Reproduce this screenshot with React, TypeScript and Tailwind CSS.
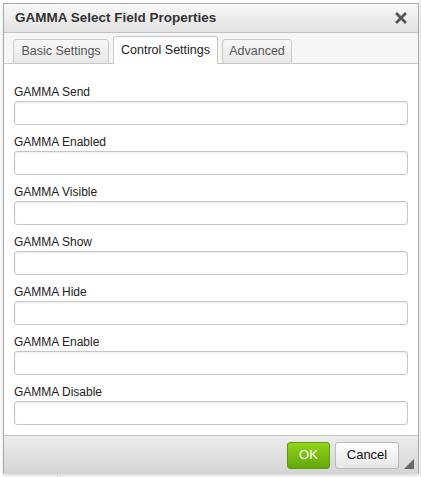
import React from "react";

const fields = [
  "GAMMA Send",
  "GAMMA Enabled",
  "GAMMA Visible",
  "GAMMA Show",
  "GAMMA Hide",
  "GAMMA Enable",
  "GAMMA Disable",
];

function CloseIcon() {
  return (
    <svg width="12" height="12" viewBox="0 0 12 12" aria-hidden>
      <path d="M2 2 L10 10 M10 2 L2 10" stroke="#555" strokeWidth="2.8" strokeLinecap="square" />
    </svg>
  );
}

export default function App() {
  return (
    <div className="relative h-[477px] w-[421px] overflow-hidden bg-white font-['Liberation_Sans',Arial,sans-serif]">
      {/* page behind the dialog */}
      <div className="absolute left-[57px] top-[470px] h-[10px] w-px bg-[#ddd]" />
      <div className="absolute right-0 top-0 h-full w-px bg-[#e5e5e5]" />

      <div className="ml-[3px] mt-[3px] flex h-[471px] w-[416px] flex-col border border-[#aaa] bg-white shadow-[0_2px_4px_rgba(0,0,0,0.15)]">
        <div className="flex h-[29px] shrink-0 items-center justify-between border-b border-[#c2c2c2] bg-gradient-to-b from-[#f7f7f7] to-[#e2e2e2] pl-[11px] pr-[7px]">
          <span className="text-[13.5px] font-bold text-[#333]">GAMMA Select Field Properties</span>
          <button type="button" className="flex size-5 items-center justify-center" aria-label="Close">
            <CloseIcon />
          </button>
        </div>

        <div className="flex h-[31px] shrink-0 items-end gap-[4px] border-b border-[#c8c8c8] bg-[#f6f6f6] pl-[9px]">
          <div className="-mb-px flex h-[25px] w-[96px] items-center justify-center rounded-t-[3px] border border-[#c8c8c8] bg-gradient-to-b from-[#f7f7f7] to-[#e8e8e8] text-[12.5px] text-[#555]">
            Basic Settings
          </div>
          <div className="-mb-px flex h-[28px] w-[105px] items-center justify-center rounded-t-[3px] border border-b-0 border-[#c8c8c8] bg-white text-[12.5px] text-[#222]">
            Control Settings
          </div>
          <div className="-mb-px flex h-[25px] w-[70px] items-center justify-center rounded-t-[3px] border border-[#c8c8c8] bg-gradient-to-b from-[#f7f7f7] to-[#e8e8e8] text-[12.5px] text-[#555]">
            Advanced
          </div>
        </div>

        <div className="flex flex-1 flex-col gap-[9px] bg-white px-[10px] pb-[10px] pt-[20px]">
          {fields.map((f) => (
            <div key={f} className="flex flex-col">
              <label className="h-[16px] text-[12px] leading-[16px] text-[#222]">{f}</label>
              <input
                type="text"
                className="mt-px h-[24px] w-full rounded-[3px] border border-[#c6c6c6] bg-white px-1 text-[12px] shadow-[inset_0_1px_2px_rgba(0,0,0,0.08)] outline-none"
              />
            </div>
          ))}
        </div>

        <div className="relative flex h-[39px] shrink-0 items-center justify-end gap-[5px] border-t border-[#c4c4c4] bg-gradient-to-b from-[#ececec] to-[#d4d4d4] pr-[19px]">
          <button
            type="button"
            className="h-[27px] w-[43px] rounded-[3px] border border-[#5c9a0a] bg-gradient-to-b from-[#93d41a] to-[#62a80a] text-[13px] text-white"
          >
            OK
          </button>
          <button
            type="button"
            className="h-[27px] w-[64px] rounded-[3px] border border-[#b9b9b9] bg-gradient-to-b from-white to-[#e6e6e6] text-[13px] font-medium text-[#111]"
          >
            Cancel
          </button>
          <svg className="absolute bottom-[5px] right-[4px]" width="10" height="10" viewBox="0 0 10 10" aria-hidden>
            <path d="M10 0 L10 10 L0 10 Z" fill="#666" />
          </svg>
        </div>
      </div>
    </div>
  );
}
